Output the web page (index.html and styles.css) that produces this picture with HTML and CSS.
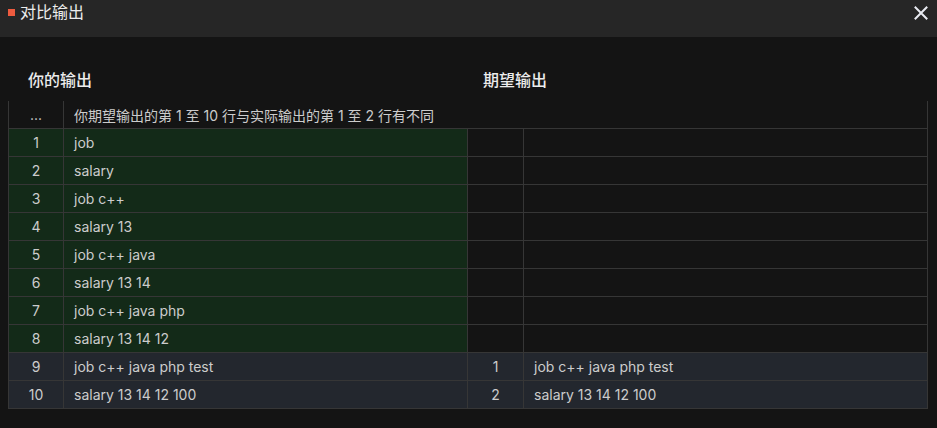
FILE: index.html
```html
<!DOCTYPE html>
<html lang="zh">
<head>
<meta charset="utf-8">
<link rel="stylesheet" href="styles.css">
</head>
<body>
<div class="dialog">
  <div class="header">
    <span class="dot"></span>
    <span class="title">对比输出</span>
    <svg class="close" width="14" height="14" viewBox="0 0 14 14"><path d="M1.5 1.5 L12.5 12.5 M12.5 1.5 L1.5 12.5" stroke="#e9ebf2" stroke-width="2" stroke-linecap="square"/></svg>
  </div>
  <div class="content">
    <div class="heads">
      <div class="head left">你的输出</div>
      <div class="head right">期望输出</div>
    </div>
    <div class="table">
      <div class="row msg">
        <div class="c num">...</div>
        <div class="c text span">你期望输出的第 1 至 10 行与实际输出的第 1 至 2 行有不同</div>
      </div>
      <div class="row"><div class="c num g">1</div><div class="c text g">job</div><div class="c num"></div><div class="c text last"></div></div>
      <div class="row"><div class="c num g">2</div><div class="c text g">salary</div><div class="c num"></div><div class="c text last"></div></div>
      <div class="row"><div class="c num g">3</div><div class="c text g">job c++</div><div class="c num"></div><div class="c text last"></div></div>
      <div class="row"><div class="c num g">4</div><div class="c text g">salary 13</div><div class="c num"></div><div class="c text last"></div></div>
      <div class="row"><div class="c num g">5</div><div class="c text g">job c++ java</div><div class="c num"></div><div class="c text last"></div></div>
      <div class="row"><div class="c num g">6</div><div class="c text g">salary 13 14</div><div class="c num"></div><div class="c text last"></div></div>
      <div class="row"><div class="c num g">7</div><div class="c text g">job c++ java php</div><div class="c num"></div><div class="c text last"></div></div>
      <div class="row"><div class="c num g">8</div><div class="c text g">salary 13 14 12</div><div class="c num"></div><div class="c text last"></div></div>
      <div class="row same"><div class="c num">9</div><div class="c text">job c++ java php test</div><div class="c num">1</div><div class="c text last">job c++ java php test</div></div>
      <div class="row same"><div class="c num">10</div><div class="c text">salary 13 14 12 100</div><div class="c num">2</div><div class="c text last">salary 13 14 12 100</div></div>
    </div>
  </div>
</div>
</body>
</html>
```

FILE: styles.css
```css
* { box-sizing: border-box; }
html, body {
  margin: 0;
  padding: 0;
  background: #141414;
  font-family: "Inter", "Noto Sans CJK SC", sans-serif;
  color: #cfcfcf;
}
.dialog {
  width: 937px;
  height: 428px;
  background: #141414;
}
.header {
  height: 37px;
  background: #262626;
  display: flex;
  align-items: center;
  padding: 0 9px 0 8px;
}
.dot {
  width: 7px;
  height: 7px;
  background: #ee5b3f;
  margin-right: 5px;
  margin-top: -12px;
}
.title {
  font-size: 16px;
  color: #ececec;
  line-height: 20px;
  margin-top: -13px;
  flex: 1;
}
.close {
  display: block;
  margin-top: -11px;
}
.content {
  padding: 0 9px 0 8px;
}
.heads {
  display: grid;
  grid-template-columns: 460px 1fr;
  height: 64px;
  align-items: center;
  padding-top: 20px;
}
.head {
  font-size: 16px;
  font-weight: 500;
  color: #ececec;
}
.head.left { padding-left: 20px; }
.head.right { padding-left: 15px; }
.table {
  width: 920px;
  border-left: 1px solid #363636;
  border-right: 1px solid #363636;
}
.row {
  display: grid;
  grid-template-columns: 55px 404px 56px 403px;
  height: 28px;
  border-bottom: 1px solid #363636;
  font-size: 14px;
}
.row.msg {
  grid-template-columns: 55px 863px;
}
.c {
  display: flex;
  align-items: center;
  border-right: 1px solid #363636;
  color: #cccccc;
}
.c.last, .c.span { border-right: none; }
.num { justify-content: center; }
.text { padding-left: 10px; }
.g { background: #132a18; }
.row.same { background: #23272e; }
```
